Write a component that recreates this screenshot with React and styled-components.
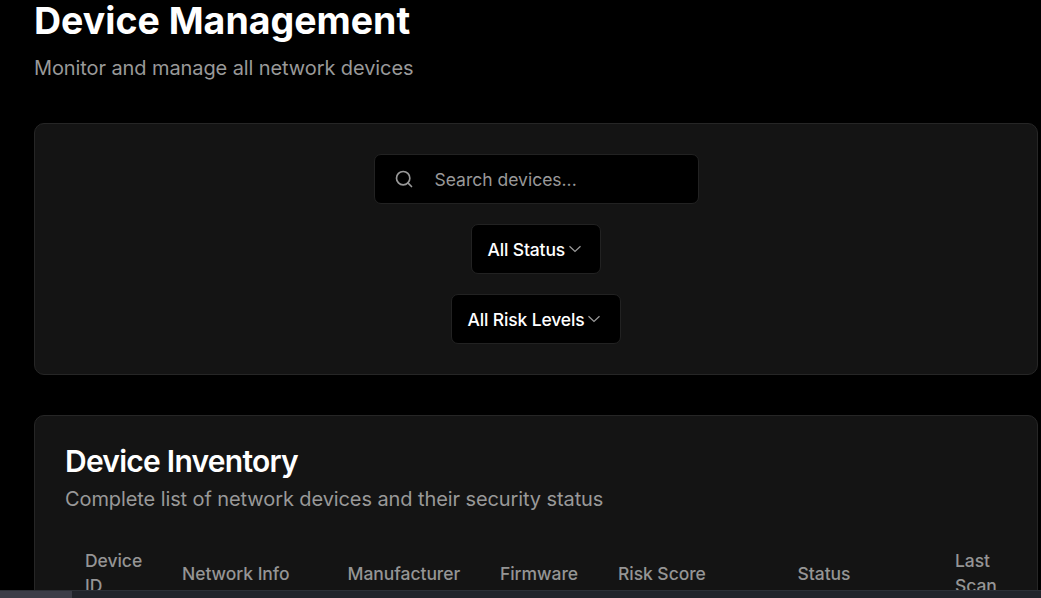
import React from "react";
import styled, { createGlobalStyle } from "styled-components";
import { Search } from "lucide-react";

const GlobalStyle = createGlobalStyle`
  * { box-sizing: border-box; }
  html, body { margin: 0; background: #000; }
  body { font-family: Inter, sans-serif; color: #fff; overflow: hidden; }
  h1, h2, p { margin: 0; }
`;

const Page = styled.div`
  height: 598px;
  overflow: hidden;
  display: flex;
  flex-direction: column;
`;
const Content = styled.main`
  flex: 1;
  min-height: 0;
  overflow: hidden;
  padding: 0 3px 0 34px;
`;
const Header = styled.header`
  height: 123px;
`;
const Title = styled.h1`
  font-size: 37.5px;
  line-height: 41px;
  font-weight: 700;
  letter-spacing: 0;
`;
const Subtitle = styled.p`
  font-size: 20px;
  line-height: 30px;
  letter-spacing: -0.095px;
  color: #999;
  margin-top: ${(p) => p.$gap || 0}px;
`;
const Card = styled.section`
  background: #141414;
  border: 1px solid #262626;
  border-radius: 10px;
`;
const Filters = styled(Card)`
  height: 252px;
  padding: 30px;
  display: flex;
  flex-direction: column;
  align-items: center;
  gap: 20px;
`;
const Control = styled.div`
  width: ${(p) => p.$width}px;
  height: 50px;
  display: flex;
  align-items: center;
  background: #000;
  border: 1px solid #222;
  border-radius: 7px;
`;
const SearchBox = styled(Control)`
  padding-left: 19px;
  gap: 21px;
  font-size: 17.5px;
  color: #999;
`;
const Select = styled(Control)`
  padding-left: 15.4px;
  gap: 3px;
  font-size: 17.5px;
  font-weight: 500;
  letter-spacing: -0.14px;
`;
const Inventory = styled(Card)`
  margin-top: 40px;
  padding: 30px;
  height: 260px;
`;
const Heading = styled.h2`
  font-size: 30px;
  line-height: 30px;
  font-weight: 600;
  letter-spacing: -0.75px;
`;
const Row = styled.div`
  display: grid;
  grid-template-columns: 97px 165.5px 152.5px 118px 179.5px 157.5px 1fr;
  align-items: center;
  margin-top: 34px;
  padding-left: 20px;
  font-size: 17.5px;
  font-weight: 500;
  letter-spacing: -0.05px;
  line-height: 25px;
  color: #959595;
`;
const Cell = styled.div`
  width: ${(p) => p.$width || "auto"};
`;
const Scrollbar = styled.div`
  height: 8px;
  flex: none;
  background: #21242b;
  border-top: 1px solid #2c3037;
`;
const Thumb = styled.div`
  width: 72px;
  height: 7px;
  background: #3b3d47;
`;

const Chevron = () => (
  <svg width="14" height="14" viewBox="0 0 14 14" fill="none" stroke="#999" strokeWidth="1.3">
    <path d="M1.5 4.2L7 9.4L12.5 4.2" />
  </svg>
);

export default function App() {
  return (
    <Page>
      <GlobalStyle />
      <Content>
        <Header>
          <Title>Device Management</Title>
          <Subtitle $gap={12}>Monitor and manage all network devices</Subtitle>
        </Header>
        <Filters>
          <SearchBox $width={325}>
            <Search size={20} strokeWidth={2} />
            <span>Search devices...</span>
          </SearchBox>
          <Select $width={130}>All Status<Chevron /></Select>
          <Select $width={170}>All Risk Levels<Chevron /></Select>
        </Filters>
        <Inventory>
          <Heading>Device Inventory</Heading>
          <Subtitle $gap={8}>Complete list of network devices and their security status</Subtitle>
          <Row>
            <Cell $width="60px">Device ID</Cell>
            <Cell>Network Info</Cell>
            <Cell>Manufacturer</Cell>
            <Cell>Firmware</Cell>
            <Cell>Risk Score</Cell>
            <Cell>Status</Cell>
            <Cell $width="50px">Last Scan</Cell>
          </Row>
        </Inventory>
      </Content>
      <Scrollbar><Thumb /></Scrollbar>
    </Page>
  );
}
